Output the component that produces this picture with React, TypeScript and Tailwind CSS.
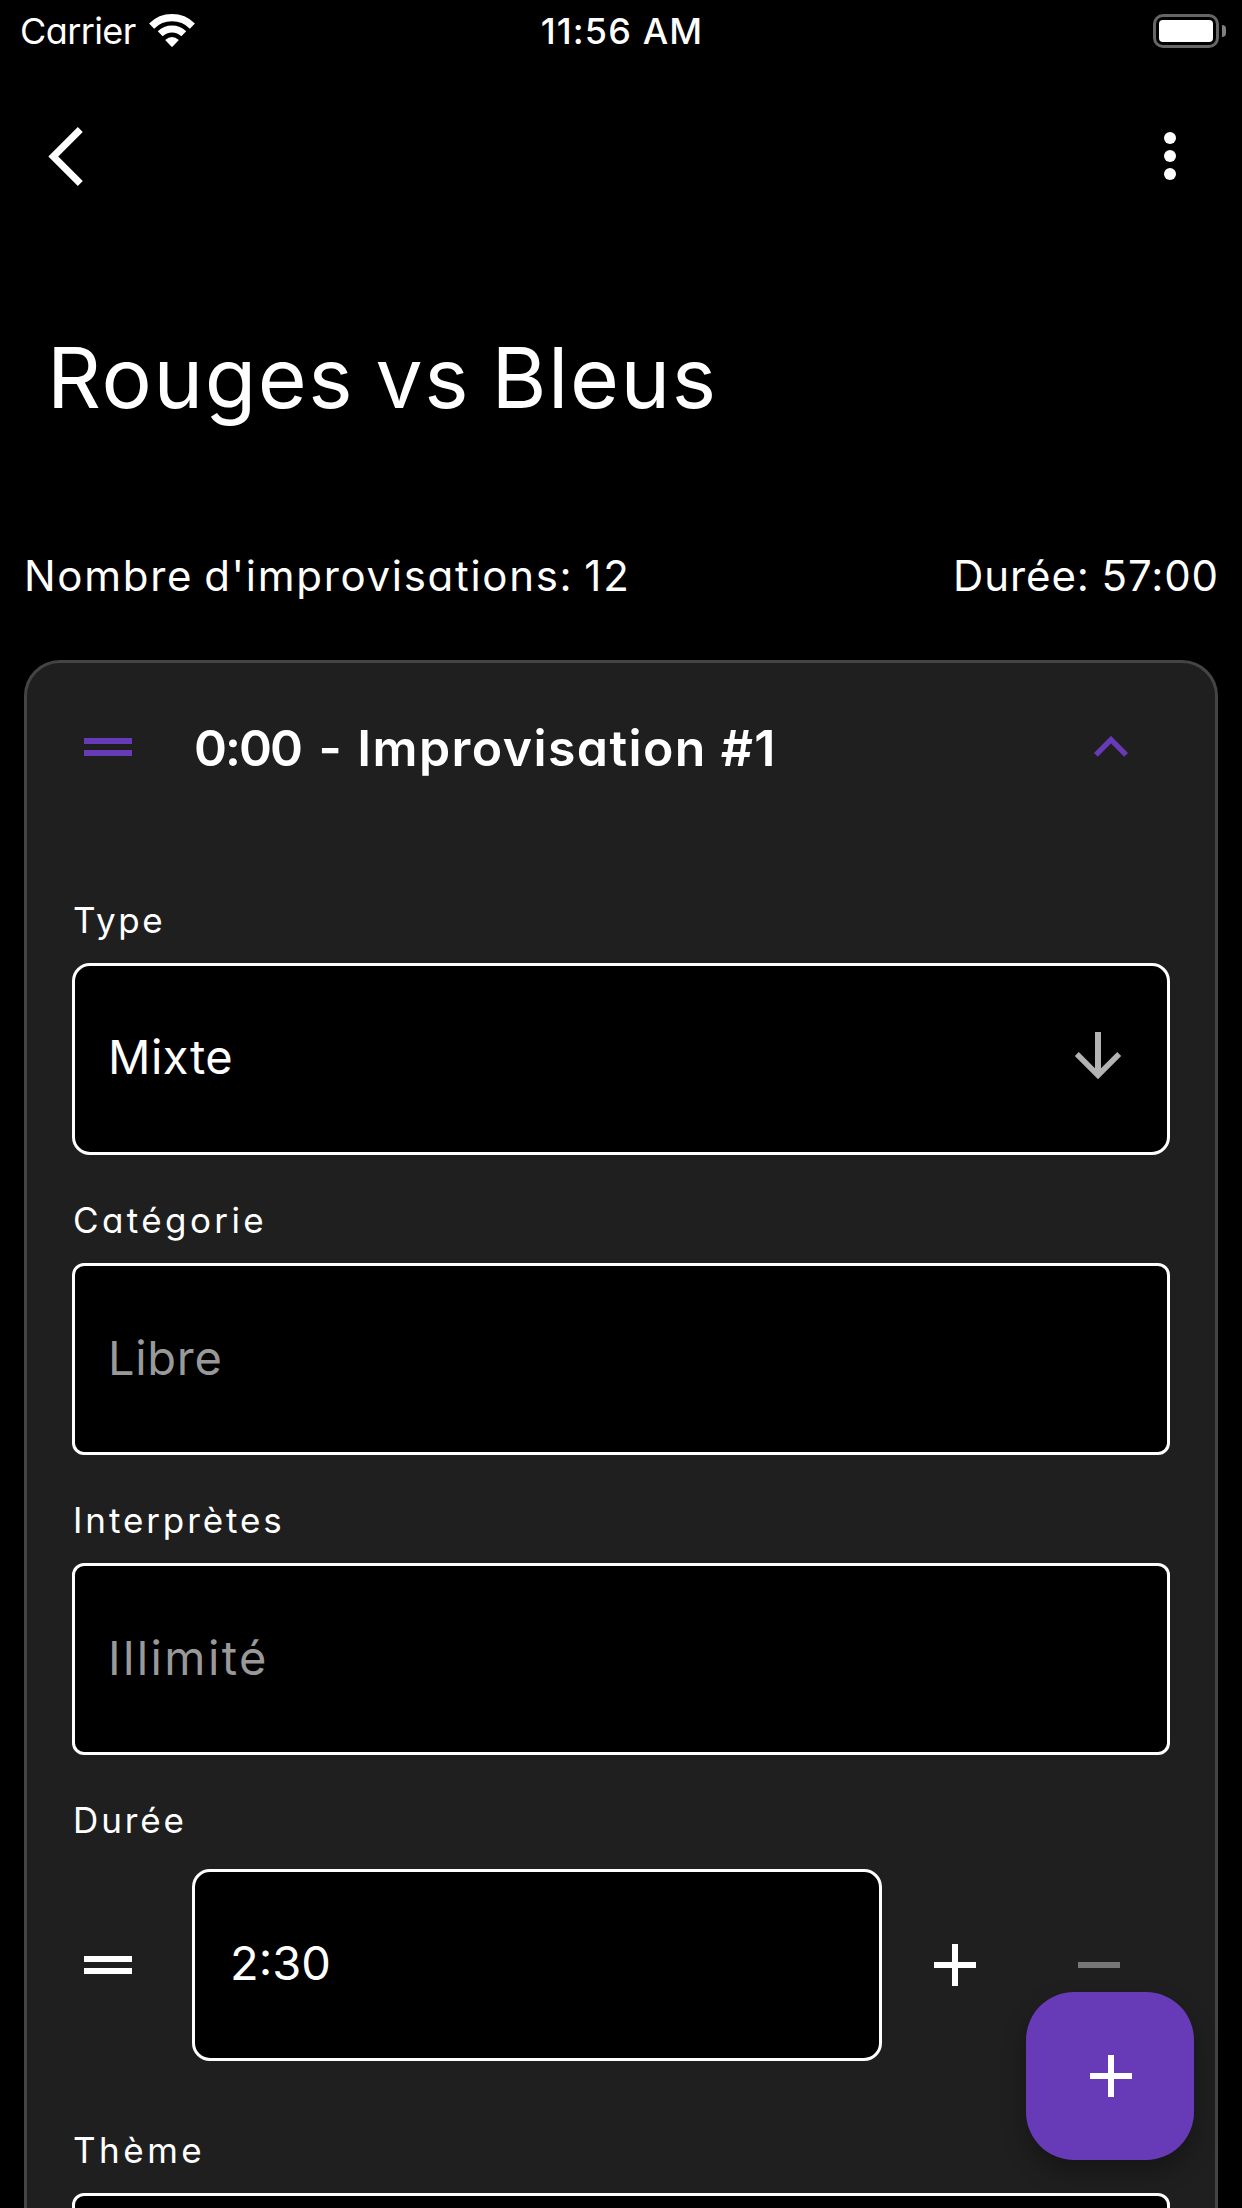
import React from "react";

function WifiIcon() {
  return (
    <svg className="block h-[34px] w-[46px] shrink-0" viewBox="0 0 46 34" fill="none" stroke="#fff">
      <path d="M2.6 12.1 A29 29 0 0 1 43.4 12.1" strokeWidth="7.2" />
      <path d="M11.2 19.7 A17 17 0 0 1 34.8 19.7" strokeWidth="7" />
      <path d="M16.2 26 Q23 20 29.8 26 L23.7 32.4 Q23 33.1 22.3 32.4 Z" fill="#fff" stroke="none" />
    </svg>
  );
}

function BatteryIcon() {
  return (
    <div className="flex items-center gap-[3px]">
      <div className="h-[34px] w-[66px] rounded-[10px] border-3 border-[#666] p-[3px]">
        <div className="h-full w-full rounded-[4px] bg-white" />
      </div>
      <div className="h-3 w-1 rounded-r-full bg-[#808080]" />
    </div>
  );
}

function StatusBar() {
  return (
    <div className="grid h-[60px] shrink-0 grid-cols-3 items-center pr-4 pl-5 text-[36px] leading-[60px]">
      <div className="flex items-center gap-[13px]">
        <span className="pt-px tracking-[-0.6px]">Carrier</span>
        <WifiIcon />
      </div>
      <span className="pt-px pr-0.5 text-center font-medium tracking-[1.1px]">11:56 AM</span>
      <div className="flex justify-end">
        <BatteryIcon />
      </div>
    </div>
  );
}

function BarsIcon({ className }: { className: string }) {
  return (
    <svg className={className} viewBox="0 0 48 18" fill="currentColor">
      <path d="M0 0h48v6H0zM0 12h48v6H0z" />
    </svg>
  );
}

function PlusIcon() {
  return (
    <svg className="block size-[42px]" viewBox="0 0 42 42" fill="#fff">
      <path d="M18 0h6v18h18v6H24v18h-6V24H0v-6h18z" />
    </svg>
  );
}

function Label({ children, className }: { children: string; className: string }) {
  return <div className={`h-12 text-[35px] leading-[46px] ${className}`}>{children}</div>;
}

export default function App() {
  return (
    <div className="relative flex h-[2208px] w-[1242px] flex-col overflow-hidden bg-black font-['Inter','Liberation_Sans',sans-serif] whitespace-nowrap text-white [font-feature-settings:'cv11']">
      <StatusBar />

      <header className="flex h-[192px] shrink-0 items-center justify-between pr-[66px] pl-12">
        <svg className="block h-[59px] w-[36px]" viewBox="0 0 36 59" fill="none" stroke="#fff" strokeWidth="7">
          <path d="M32.3 2.5 L5.3 29.5 L32.3 56.5" />
        </svg>
        <div className="flex flex-col gap-1.5">
          <span className="size-3 rounded-full bg-white" />
          <span className="size-3 rounded-full bg-white" />
          <span className="size-3 rounded-full bg-white" />
        </div>
      </header>

      <h1 className="mt-[66px] h-[120px] shrink-0 pl-[47px] text-[84px] leading-[120px] tracking-[1.6px] [word-spacing:-4px]">Rouges vs Bleus</h1>

      <div className="mt-[108px] flex h-[60px] shrink-0 justify-between pr-[23px] pl-6 text-[42px] leading-[60px]">
        <span className="tracking-[1.7px] [word-spacing:-2.5px]">Nombre d'improvisations: 12</span>
        <span className="tracking-[0.9px] [word-spacing:-1px]">Durée: 57:00</span>
      </div>

      <section className="mx-6 mt-[54px] h-[1700px] shrink-0 rounded-t-[36px] border-3 border-[#444] bg-[#1f1f1f] px-[45px]">
        <div className="flex h-[168px] items-center pr-[42px] pl-3">
          <BarsIcon className="block h-[18px] w-12 shrink-0 text-[#673ab7]" />
          <h2 className="ml-[62px] flex-1 pt-px text-[50px] leading-[60px] font-semibold tracking-[1.4px]">
            <span className="tracking-[-2px] [word-spacing:7px]">0:00 - </span>Improvisation #1
          </h2>
          <svg className="-mt-px block h-[21px] w-[34px] shrink-0" viewBox="0 0 34 21" fill="none" stroke="#673ab7" strokeWidth="5.4">
            <path d="M1.9 18.8 L17 3.7 L32.1 18.8" />
          </svg>
        </div>

        <Label className="mt-[66px] pl-px tracking-[2.6px]">Type</Label>
        <div className="mt-[18px] flex h-48 items-center justify-between rounded-[18px] border-3 border-white bg-black pr-[45px] pb-1 pl-[33px]">
          <span className="text-[47px] tracking-[0.5px]">Mixte</span>
          <svg className="-mt-0.5 block h-[48px] w-[48px]" viewBox="0 0 48 48" fill="none" stroke="#b3b3b3">
            <path d="M24 0v42" strokeWidth="6" />
            <path d="M2.8 22 L24 43.2 L45.2 22" strokeWidth="5.6" />
          </svg>
        </div>

        <Label className="mt-[42px] pl-px tracking-[3.4px]">Catégorie</Label>
        <div className="mt-[18px] flex h-48 items-center rounded-[12px] border-3 border-white bg-black pb-0.5 pl-[33px] text-[47px] tracking-[0.7px] text-[#999]">
          Libre
        </div>

        <Label className="mt-[42px] pl-px tracking-[2.9px]">Interprètes</Label>
        <div className="mt-[18px] flex h-48 items-center rounded-[12px] border-3 border-white bg-black pb-0.5 pl-[33px] text-[47px] tracking-[2.4px] text-[#999]">
          Illimité
        </div>

        <Label className="mt-[42px] pl-px tracking-[2.9px]">Durée</Label>
        <div className="mt-6 flex h-48 items-center pl-3">
          <BarsIcon className="block h-[18px] w-12 text-white" />
          <div className="ml-15 flex h-48 w-[690px] items-center rounded-[18px] border-3 border-white bg-black pb-1 pl-[35px] text-[47px]">
            2:30
          </div>
          <div className="ml-[52px]">
            <PlusIcon />
          </div>
          <div className="ml-[102px] h-1.5 w-[42px] bg-[#777]" />
        </div>

        <Label className="mt-[66px] pl-px tracking-[3.5px]">Thème</Label>
        <div className="mt-[18px] h-48 rounded-[12px] border-3 border-white bg-black" />
      </section>

      <button className="absolute right-12 bottom-12 flex size-[168px] items-center justify-center rounded-[48px] bg-[#673ab7] pl-0.5 shadow-[0_12px_24px_rgba(0,0,0,0.3)]">
        <PlusIcon />
      </button>
    </div>
  );
}
